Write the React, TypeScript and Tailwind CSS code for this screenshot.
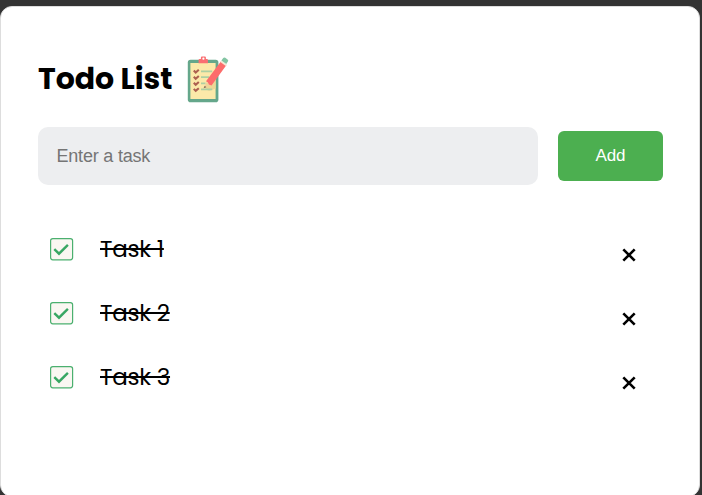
import { useState } from "react";

function ClipboardIcon() {
  return (
    <svg width="42" height="48" viewBox="0 0 42 48" className="mt-px block shrink-0" aria-hidden="true">
      <rect x="0.8" y="3.8" width="30.6" height="42.4" rx="2.8" fill="#65a78b" />
      <path d="M3.4 7h25.2v36H3.4z" fill="#fce9a9" />
      <path d="M18.5 33 28.6 20v12.5L22 35z" fill="#ecd795" />
      <path d="M11.6 7.2V3.9q0-.9.9-.9h1.4V1.4q0-1 1-1h3q1 0 1 1V3h1.1q.9 0 .9.9v3.3z" fill="#fa6f72" />
      <circle cx="16.4" cy="2.7" r="1.1" fill="#fff" />
      <path d="M14 15.4h11.2M14 21.2h8M14 27.4h4.5M14 33.4h11.2" stroke="#add0a2" strokeWidth="1.7" />
      <path
        d="m6.8 14.5 1.9 2 3.1-2.7M6.8 20.7l1.9 2 3.1-2.7M6.8 26.7l1.9 2 3.1-2.7M6.8 32.9l1.9 2 3.1-2.7"
        fill="none"
        stroke="#ad6050"
        strokeWidth="2.1"
      />
      <path d="m16.6 32.3 3-6.3 4.2 3.6z" fill="#efd49a" />
      <path d="m16.6 32.3 1.1-2.5 1.9 1.4z" fill="#85705c" />
      <path d="m19 25.2 15-20 5.5 3.9-15 20.3-2.6-.8-1-2z" fill="#fc6c6b" />
      <path d="m33.3 6.1 1.1-1.5 5.5 3.9-1.1 1.5z" fill="#f4e8d4" />
      <path d="m34.4 4.6 1.8-2.5q.9-1.2 2.1-.4l2.3 1.7q1.2.9.3 2.1l-1.6 2.5z" fill="#83c5a3" />
    </svg>
  );
}

function CheckedBox() {
  return (
    <svg width="24" height="24" viewBox="0 0 24 24" className="block shrink-0" aria-hidden="true">
      <rect x="0.6" y="0.6" width="22" height="21.2" rx="2.2" fill="#faf7f2" stroke="#4bb06f" strokeWidth="1.2" />
      <path d="m4.3 11.1 4.7 4.6 8.9-8.9" fill="none" stroke="#38a763" strokeWidth="2.4" />
    </svg>
  );
}

function TaskRow({ name, onRemove }: { name: string; onRemove: () => void }) {
  return (
    <li className="flex h-16 items-center pr-[27px] pl-3">
      <CheckedBox />
      <span className="-mt-0.5 ml-[26px] flex-1 font-[Poppins,Inter,sans-serif] text-[23px] leading-9 tracking-[-0.25px] line-through decoration-2">
        {name}
      </span>
      <button onClick={onRemove} aria-label="Remove" className="mt-[9px] block">
        <svg width="14" height="14" viewBox="0 0 14 14">
          <path d="m1.3 1.3 11.4 11.4M12.7 1.3 1.3 12.7" stroke="#000" strokeWidth="2.6" />
        </svg>
      </button>
    </li>
  );
}

export default function App() {
  const [tasks, setTasks] = useState(["Task 1", "Task 2", "Task 3"]);
  const [draft, setDraft] = useState("");

  const add = () => {
    if (draft.trim()) {
      setTasks([...tasks, draft.trim()]);
      setDraft("");
    }
  };

  return (
    <div className="h-screen overflow-hidden bg-[#333333] pt-1.5 pr-0.5 text-black">
      <main className="h-[491px] rounded-xl border border-[#dddddd] bg-white pt-12 pr-9 pl-[37px]">
        <header className="flex h-12 items-center">
          <h1 className="-mt-0.5 w-[149px] font-[Poppins,Inter,sans-serif] text-[30px] leading-[45px] font-bold tracking-[-0.05px] whitespace-nowrap">
            Todo List
          </h1>
          <ClipboardIcon />
        </header>
        <div className="mt-6 flex items-center gap-5 font-['Liberation_Sans',Arial,sans-serif]">
          <input
            value={draft}
            onChange={(e) => setDraft(e.target.value)}
            placeholder="Enter a task"
            className="h-[58px] w-[500px] rounded-[10px] bg-[#edeef0] pr-[18px] pl-[18.5px] text-lg tracking-[-0.2px] outline-none placeholder:text-[#757575]"
          />
          <button onClick={add} className="h-[50px] w-[105px] rounded-[6px] bg-[#4caf50] text-[17px] tracking-[-0.1px] text-white">
            Add
          </button>
        </div>
        <ul className="mt-[33px]">
          {tasks.map((task, i) => (
            <TaskRow key={i} name={task} onRemove={() => setTasks(tasks.filter((_, j) => j !== i))} />
          ))}
        </ul>
      </main>
    </div>
  );
}
